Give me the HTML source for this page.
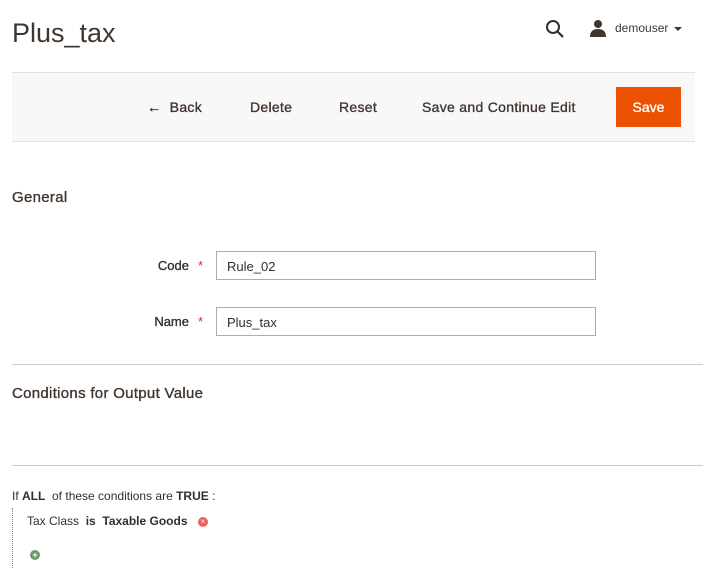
<!DOCTYPE html>
<html><head><meta charset="utf-8"><style>
*{margin:0;padding:0;box-sizing:border-box}
body{width:703px;height:575px;overflow:hidden;background:#fff;font-family:"Liberation Sans",sans-serif;color:#303030;position:relative}
.a{position:absolute;white-space:nowrap}
.sb{font-weight:normal;-webkit-text-stroke:0.35px currentColor}
.btn{font-size:14px;color:#41362f;top:99px;letter-spacing:0.3px}
.lbl{font-size:13px;color:#303030}
.inp{position:absolute;left:216px;width:380px;height:29px;border:1px solid #adadad;font-size:13px;padding:7px 0 0 10px;color:#303030}
.star{color:#e22626;font-size:13px}
</style></head><body>
<div class="a" style="left:12px;top:18px;font-size:27px;color:#41362f">Plus_tax</div>
<svg class="a" style="left:545px;top:19px" width="20" height="20" viewBox="0 0 20 20"><circle cx="8" cy="8" r="6" fill="none" stroke="#303030" stroke-width="2"/><path d="M12.5 12.5L18 18" stroke="#303030" stroke-width="2.2"/></svg>
<svg class="a" style="left:589px;top:19px" width="18" height="18" viewBox="0 0 18 18"><circle cx="9" cy="5" r="4" fill="#41362f"/><path d="M1 18 Q1 10 9 10 Q17 10 17 18Z" fill="#41362f"/></svg>
<div class="a" style="left:615px;top:21px;font-size:12px;color:#41362f">demouser</div>
<div class="a" style="left:674px;top:27px;width:0;height:0;border-left:4px solid transparent;border-right:4px solid transparent;border-top:4px solid #41362f"></div>
<div class="a" style="left:12px;top:72px;width:683px;height:70px;background:#f8f8f8;border-top:1px solid #e3e3e3;border-bottom:1px solid #e3e3e3"></div>
<div class="a btn sb" style="left:147px">&#8592;&nbsp; Back</div>
<div class="a btn sb" style="left:250px">Delete</div>
<div class="a btn sb" style="left:339px">Reset</div>
<div class="a btn sb" style="left:422px">Save and Continue Edit</div>
<div class="a sb" style="left:616px;top:87px;width:65px;height:40px;background:#eb5202;color:#fff;font-size:14px;text-align:center;line-height:40px">Save</div>
<div class="a sb" style="left:12px;top:189px;font-size:15px;color:#41362f;letter-spacing:0.3px">General</div>
<div class="a lbl sb" style="right:514px;top:258px">Code</div><div class="a star" style="left:198px;top:258px">*</div>
<div class="inp" style="top:251px">Rule_02</div>
<div class="a lbl sb" style="right:514px;top:314px">Name</div><div class="a star" style="left:198px;top:314px">*</div>
<div class="inp" style="top:307px">Plus_tax</div>
<div class="a" style="left:12px;top:364px;width:691px;height:1px;background:#cccccc"></div>
<div class="a sb" style="left:12px;top:385px;font-size:15px;color:#41362f;letter-spacing:0.3px">Conditions for Output Value</div>
<div class="a" style="left:12px;top:465px;width:691px;height:1px;background:#d1c9c0"></div>
<div class="a" style="left:12px;top:489px;font-size:12px;color:#303030">If <b>ALL</b>&nbsp; of these conditions are <b>TRUE</b> :</div>
<div class="a" style="left:12px;top:508px;height:60px;border-left:1px dotted #888"></div>
<div class="a" style="left:27px;top:514px;font-size:12px;color:#303030">Tax Class&nbsp; <b>is</b>&nbsp; <b>Taxable Goods</b></div>
<div class="a" style="left:198px;top:517px;width:10px;height:10px;border-radius:50%;background:#e86060;color:#fff;font-size:8px;line-height:10px;text-align:center">×</div>
<div class="a" style="left:30px;top:550px;width:10px;height:10px;border-radius:50%;background:#6a9a6a;color:#fff;font-size:9px;line-height:10px;text-align:center;font-weight:bold">+</div>
</body></html>
